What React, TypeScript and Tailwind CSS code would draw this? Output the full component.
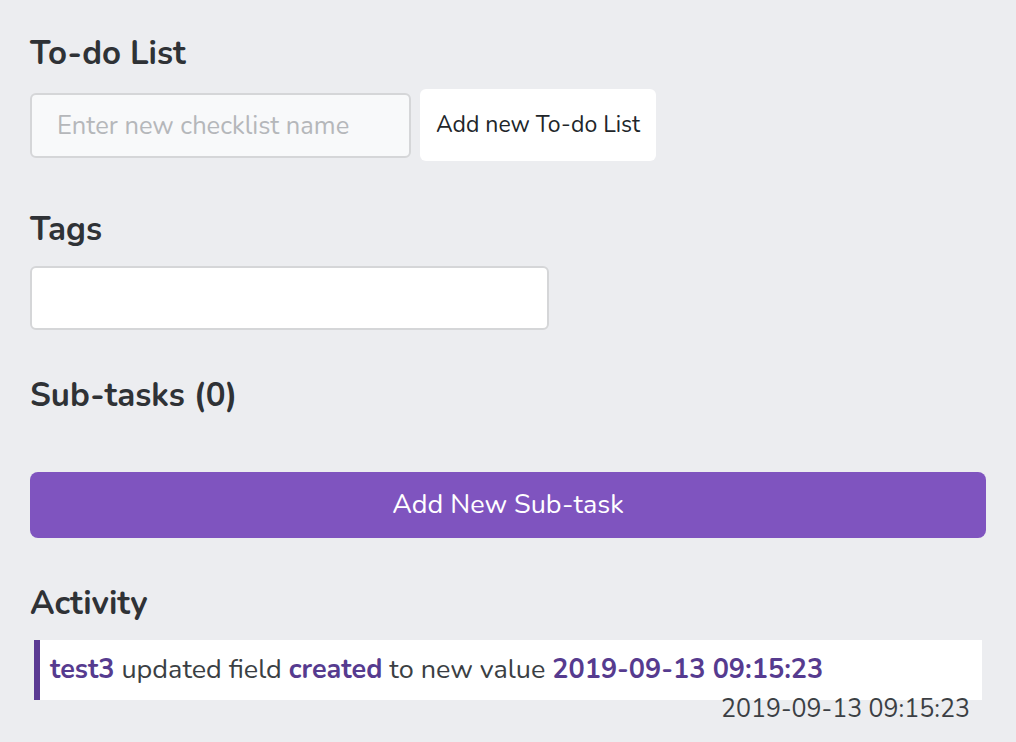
export default function App() {
  return (
    <div className="min-h-screen w-full bg-[#ecedf0] px-[30px] pt-[34px] pb-6 text-[#343a40] font-['Nunito','Lato',sans-serif]">
      <h2 className="text-[33px] leading-[40px] font-bold text-[#2f3236]">To-do List</h2>
      <div className="mt-[15px] flex items-center gap-[9px]">
        <input
          className="h-[65px] w-[381px] rounded-[6px] border-2 border-[#d5d6d8] bg-[#f8f9fa] px-[25px] text-[25.5px] text-[#343a40] placeholder:text-[#b5b7ba] outline-none"
          placeholder="Enter new checklist name"
        />
        <button className="h-[72px] w-[236px] rounded-[6px] bg-white text-[23px] text-[#212529]">Add new To-do List</button>
      </div>

      <h2 className="mt-[49px] text-[33px] leading-[40px] font-bold text-[#2f3236]">Tags</h2>
      <input className="mt-[16px] block h-[64px] w-[519px] rounded-[6px] border-2 border-[#d5d6d8] bg-white px-4 text-[24px] outline-none" />

      <h2 className="mt-[46px] text-[33px] leading-[40px] font-bold text-[#2f3236]">Sub-tasks (0)</h2>
      <button className="mt-[56px] block h-[66px] w-full rounded-[8px] bg-[#7f54bf] text-[27px] text-white">Add New Sub-task</button>

      <h2 className="mt-[46px] text-[33px] leading-[40px] font-bold text-[#2f3236]">Activity</h2>
      <div className="mt-[16px] ml-[4px] mr-[4px]">
        <div className="flex h-[60px] items-center border-l-[6px] border-[#5b3a93] bg-white pl-[10px] text-[27px] text-[#3b3f44]">
          <p>
            <span className="font-bold text-[#563b8f]">test3</span> updated field{" "}
            <span className="font-bold text-[#563b8f]">created</span> to new value{" "}
            <span className="font-bold text-[#563b8f]">2019-09-13 09:15:23</span>
          </p>
        </div>
        <p className="pr-[12px] text-right text-[25px] leading-[18px] text-[#3b3f44]">2019-09-13 09:15:23</p>
      </div>
    </div>
  )
}
